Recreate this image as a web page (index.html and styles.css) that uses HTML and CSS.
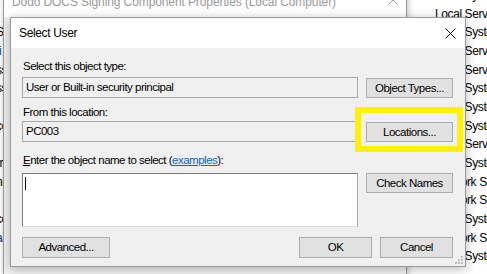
FILE: index.html
```html
<!DOCTYPE html>
<html>
<head>
<meta charset="utf-8">
<link rel="stylesheet" href="styles.css">
</head>
<body>
<div class="desktop">
  <div class="services">
    <div class="svc-row"><span class="frag"></span><span>Local System</span></div>
    <div class="svc-row"><span class="frag"></span><span>Local Service</span></div>
    <div class="svc-row"><span class="frag">Ss</span><span>Local System</span></div>
    <div class="svc-row"><span class="frag blue">Ii</span><span>Local Service</span></div>
    <div class="svc-row"><span class="frag">ss</span><span>Local Service</span></div>
    <div class="svc-row"><span class="frag">ss</span><span>Local System</span></div>
    <div class="svc-row"><span class="frag"></span><span>Local System</span></div>
    <div class="svc-row"><span class="frag">cc</span><span>Local System</span></div>
    <div class="svc-row"><span class="frag"></span><span>Local Service</span></div>
    <div class="svc-row"><span class="frag">rr</span><span>Local System</span></div>
    <div class="svc-row"><span class="frag">nn</span><span>Network Service</span></div>
    <div class="svc-row"><span class="frag"></span><span>Network Service</span></div>
    <div class="svc-row"><span class="frag">cc</span><span>Local System</span></div>
    <div class="svc-row"><span class="frag blue">aa</span><span>Network Service</span></div>
    <div class="svc-row"><span class="frag"></span><span>Local System</span></div>
  </div>

  <div class="win props">
    <div class="props-title">
      <span class="props-caption">Dodo DOCS Signing Component Properties (Local Computer)</span>
      <svg class="props-close" width="10" height="10" viewBox="0 0 10 10"><path d="M0.5 0.5L9.5 9.5M9.5 0.5L0.5 9.5" stroke="#9a9a9a" stroke-width="1" fill="none"/></svg>
    </div>
  </div>

  <div class="win select">
    <div class="select-title">
      <span class="caption">Select User</span>
      <svg class="close" width="11" height="11" viewBox="0 0 11 11"><path d="M0.5 0.5L10.5 10.5M10.5 0.5L0.5 10.5" stroke="#000" stroke-width="1" fill="none"/></svg>
    </div>
    <div class="select-body">
      <div class="form">
        <div class="label l1">Select this object type:</div>
        <div class="field">User or Built-in security principal</div>
        <div class="btn">Object Types...</div>

        <div class="label l2">From this location:</div>
        <div class="field">PC003</div>
        <div class="btn">Locations...</div>

        <div class="label l3"><u>E</u>nter the object name to select (<a class="link">examples</a>):</div>
        <div class="names"><span class="caret"></span></div>
        <div class="btn btn-check">Check Names</div>
      </div>
      <div class="actions">
        <div class="btn adv">Advanced...</div>
        <div class="spacer"></div>
        <div class="btn small">OK</div>
        <div class="btn small">Cancel</div>
      </div>
    </div>
    <svg class="grip" width="8" height="8" viewBox="0 0 8 8">
      <rect x="6" y="0" width="2" height="2" fill="#bdbdbd"/>
      <rect x="3" y="3" width="2" height="2" fill="#bdbdbd"/>
      <rect x="6" y="3" width="2" height="2" fill="#bdbdbd"/>
      <rect x="0" y="6" width="2" height="2" fill="#bdbdbd"/>
      <rect x="3" y="6" width="2" height="2" fill="#bdbdbd"/>
      <rect x="6" y="6" width="2" height="2" fill="#bdbdbd"/>
    </svg>
  </div>

  <div class="highlight"></div>
</div>
</body>
</html>
```

FILE: styles.css
```css
* { box-sizing: border-box; }
html, body { margin: 0; padding: 0; }
body {
  width: 487px;
  height: 274px;
  overflow: hidden;
  font-family: "Liberation Sans", Arial, sans-serif;
  font-size: 12px;
  color: #000;
}
.desktop {
  position: relative;
  width: 487px;
  height: 274px;
  overflow: hidden;
  background: #fff;
}

/* services list behind the windows */
.services {
  position: absolute;
  left: 0;
  top: -14px;
  width: 487px;
}
.svc-row {
  display: grid;
  grid-template-columns: 435px auto;
  height: 18.67px;
  line-height: 18.67px;
  white-space: nowrap;
  font-size: 12px;
  letter-spacing: -0.4px;
}
.frag { margin-left: -4px; }
.frag.blue { color: #1a3a7a; }

/* windows */
.win { position: absolute; }
.props {
  left: 3px;
  top: -20px;
  width: 404px;
  height: 310px;
  background: #f0f0f0;
  border: 1px solid #9a9a9a;
  box-shadow: 1px 1px 6px rgba(0, 0, 0, 0.25);
}
.props-title {
  height: 36px;
  background: #fff;
  display: flex;
  align-items: flex-start;
  justify-content: space-between;
  padding: 14px 0 0 8px;
  color: #9a9a9a;
  line-height: 15px;
  letter-spacing: -0.1px;
}
.props-close { margin: 0 8px 0 0; }

.select {
  left: 10px;
  top: 17px;
  width: 456px;
  height: 250px;
  border: 1px solid #9b9b9b;
  background: #f0f0f0;
  box-shadow: 0 2px 10px rgba(0, 0, 0, 0.28);
  display: flex;
  flex-direction: column;
}
.select-title {
  height: 30px;
  flex: none;
  background: #fff;
  display: flex;
  align-items: center;
  justify-content: space-between;
  padding: 0 9px 0 8px;
  line-height: 15px;
  letter-spacing: -0.35px;
}
.close { display: block; }

.select-body {
  flex: 1;
  padding: 11px 12px 8px 11px;
  display: flex;
  flex-direction: column;
  font-size: 11.5px;
  letter-spacing: -0.5px;
}
.form {
  display: grid;
  grid-template-columns: 336px 87px;
  column-gap: 8px;
  align-items: start;
}
.label {
  grid-column: 1 / 3;
  line-height: 15px;
  padding-left: 1px;
}
.l1 { margin-bottom: 3px; }
.l2 { margin-top: 7px; margin-bottom: 1px; }
.l3 { margin-top: 11px; margin-bottom: 5px; }
.link { color: #0066cc; text-decoration: underline; }

.field {
  height: 21px;
  border: 1px solid #a8a8a8;
  padding: 2px 3px 0;
  line-height: 15px;
  white-space: nowrap;
}
.names {
  height: 54px;
  background: #fff;
  border: 1px solid #a8a8a8;
  border-top-color: #7c7c7c;
  border-left-color: #7c7c7c;
  border-bottom-color: #dcdcdc;
  padding: 3px 2px;
}
.caret {
  display: block;
  width: 1px;
  height: 13px;
  background: #000;
}

.btn {
  height: 21px;
  background: #e1e1e1;
  border: 1px solid #adadad;
  display: flex;
  align-items: center;
  justify-content: center;
  line-height: 15px;
  white-space: nowrap;
}
.form .btn { margin-top: 1px; height: 20px; }
.form .btn-check { margin-top: 0; }

.actions {
  margin-top: auto;
  display: flex;
  gap: 8px;
}
.adv { width: 88px; }
.spacer { flex: 1; }
.small { width: 73px; }

.grip {
  position: absolute;
  right: 2px;
  bottom: 2px;
}

.highlight {
  position: absolute;
  left: 355px;
  top: 107px;
  width: 108px;
  height: 45px;
  border: 6px solid #fff200;
}
```
